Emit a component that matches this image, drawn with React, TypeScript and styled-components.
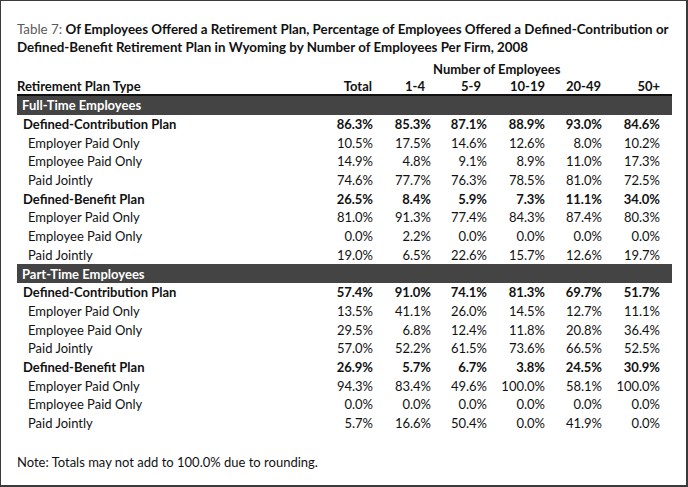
import React from 'react';
import styled, { createGlobalStyle } from 'styled-components';

type Row = {
  label: string;
  kind: 'plan' | 'sub';
  values: string[];
};

type Section = {
  title: string;
  rows: Row[];
};

const columns = ['Total', '1-4', '5-9', '10-19', '20-49', '50+'];

const sections: Section[] = [
  {
    title: 'Full-Time Employees',
    rows: [
      { label: 'Defined-Contribution Plan', kind: 'plan', values: ['86.3%', '85.3%', '87.1%', '88.9%', '93.0%', '84.6%'] },
      { label: 'Employer Paid Only', kind: 'sub', values: ['10.5%', '17.5%', '14.6%', '12.6%', '8.0%', '10.2%'] },
      { label: 'Employee Paid Only', kind: 'sub', values: ['14.9%', '4.8%', '9.1%', '8.9%', '11.0%', '17.3%'] },
      { label: 'Paid Jointly', kind: 'sub', values: ['74.6%', '77.7%', '76.3%', '78.5%', '81.0%', '72.5%'] },
      { label: 'Defined-Benefit Plan', kind: 'plan', values: ['26.5%', '8.4%', '5.9%', '7.3%', '11.1%', '34.0%'] },
      { label: 'Employer Paid Only', kind: 'sub', values: ['81.0%', '91.3%', '77.4%', '84.3%', '87.4%', '80.3%'] },
      { label: 'Employee Paid Only', kind: 'sub', values: ['0.0%', '2.2%', '0.0%', '0.0%', '0.0%', '0.0%'] },
      { label: 'Paid Jointly', kind: 'sub', values: ['19.0%', '6.5%', '22.6%', '15.7%', '12.6%', '19.7%'] },
    ],
  },
  {
    title: 'Part-Time Employees',
    rows: [
      { label: 'Defined-Contribution Plan', kind: 'plan', values: ['57.4%', '91.0%', '74.1%', '81.3%', '69.7%', '51.7%'] },
      { label: 'Employer Paid Only', kind: 'sub', values: ['13.5%', '41.1%', '26.0%', '14.5%', '12.7%', '11.1%'] },
      { label: 'Employee Paid Only', kind: 'sub', values: ['29.5%', '6.8%', '12.4%', '11.8%', '20.8%', '36.4%'] },
      { label: 'Paid Jointly', kind: 'sub', values: ['57.0%', '52.2%', '61.5%', '73.6%', '66.5%', '52.5%'] },
      { label: 'Defined-Benefit Plan', kind: 'plan', values: ['26.9%', '5.7%', '6.7%', '3.8%', '24.5%', '30.9%'] },
      { label: 'Employer Paid Only', kind: 'sub', values: ['94.3%', '83.4%', '49.6%', '100.0%', '58.1%', '100.0%'] },
      { label: 'Employee Paid Only', kind: 'sub', values: ['0.0%', '0.0%', '0.0%', '0.0%', '0.0%', '0.0%'] },
      { label: 'Paid Jointly', kind: 'sub', values: ['5.7%', '16.6%', '50.4%', '0.0%', '41.9%', '0.0%'] },
    ],
  },
];

const GlobalStyle = createGlobalStyle`
  html, body {
    margin: 0;
    padding: 0;
    background: #fff;
  }
  body {
    font-family: Lato, "Liberation Sans", sans-serif;
    color: #111;
  }
`;

const Frame = styled.div`
  box-sizing: border-box;
  width: 688px;
  height: 487px;
  border-style: solid;
  border-color: #3a3a3a;
  border-width: 1px 2px 2px 1px;
  padding: 19px 14px 0 16px;
  display: flex;
  flex-direction: column;
`;

const Title = styled.div`
  font-size: 13.35px;
  line-height: 18px;
  font-weight: 700;
  white-space: nowrap;
  color: #111;
`;

const TableNo = styled.span`
  font-weight: 400;
  color: #5a5a5a;
`;

const Table = styled.table`
  margin-top: 4px;
  border-collapse: collapse;
  table-layout: fixed;
  width: 655px;
  font-size: 13px;
`;

const LabelCol = styled.col`
  width: 299px;
`;

const NumCol = styled.col<{ $w: number }>`
  width: ${p => p.$w}px;
`;

const GroupHead = styled.th`
  height: 17px;
  padding: 0 0 0 60px;
  text-align: left;
  font-weight: 700;
  white-space: nowrap;
`;

const HeadRow = styled.tr`
  border-bottom: 2px solid #111;
`;

const HeadCell = styled.th<{ $left?: boolean; $pr: number }>`
  height: 17px;
  padding: 0 ${p => p.$pr}px 0 0;
  text-align: ${p => (p.$left ? 'left' : 'right')};
  font-weight: 700;
  white-space: nowrap;
`;

const BandCell = styled.td`
  height: 18.7px;
  padding: 0 0 0 5px;
  background: #444;
  color: #fff;
  font-weight: 700;
`;

const LabelCell = styled.td<{ $kind: 'plan' | 'sub' }>`
  height: 18.7px;
  padding: 0 0 0 ${p => (p.$kind === 'plan' ? '6px' : '11px')};
  font-weight: ${p => (p.$kind === 'plan' ? 700 : 400)};
  white-space: nowrap;
`;

const NumCell = styled.td<{ $bold: boolean; $pr: number }>`
  height: 18.7px;
  padding: 0 ${p => p.$pr}px 0 0;
  text-align: right;
  font-weight: ${p => (p.$bold ? 700 : 400)};
  white-space: nowrap;
`;

const Note = styled.div`
  margin-top: 21px;
  font-size: 13px;
  line-height: 18px;
`;

const colWidths = [57, 58, 56, 58, 57, 70];
const headPad = [1, 6, 6, 0, 1, 12];

export default function App() {
  return (
    <>
      <GlobalStyle />
      <Frame>
        <Title>
          <TableNo>Table 7: </TableNo>
          Of Employees Offered a Retirement Plan, Percentage of Employees Offered a Defined-Contribution or
          <br />
          Defined-Benefit Retirement Plan in Wyoming by Number of Employees Per Firm, 2008
        </Title>
        <Table>
          <colgroup>
            <LabelCol />
            {colWidths.map((w, i) => (
              <NumCol key={i} $w={w} />
            ))}
          </colgroup>
          <thead>
            <tr>
              <th />
              <th />
              <GroupHead colSpan={5}>Number of Employees</GroupHead>
            </tr>
            <HeadRow>
              <HeadCell $left $pr={0}>Retirement Plan Type</HeadCell>
              {columns.map((c, i) => (
                <HeadCell key={c} $pr={headPad[i]}>{c}</HeadCell>
              ))}
            </HeadRow>
          </thead>
          {sections.map(section => (
            <tbody key={section.title}>
              <tr>
                <BandCell colSpan={7}>{section.title}</BandCell>
              </tr>
              {section.rows.map((row, ri) => (
                <tr key={ri}>
                  <LabelCell $kind={row.kind}>{row.label}</LabelCell>
                  {row.values.map((v, vi) => (
                    <NumCell key={vi} $bold={row.kind === 'plan'} $pr={vi === 5 ? 12 : 0}>
                      {v}
                    </NumCell>
                  ))}
                </tr>
              ))}
            </tbody>
          ))}
        </Table>
        <Note>Note: Totals may not add to 100.0% due to rounding.</Note>
      </Frame>
    </>
  );
}
